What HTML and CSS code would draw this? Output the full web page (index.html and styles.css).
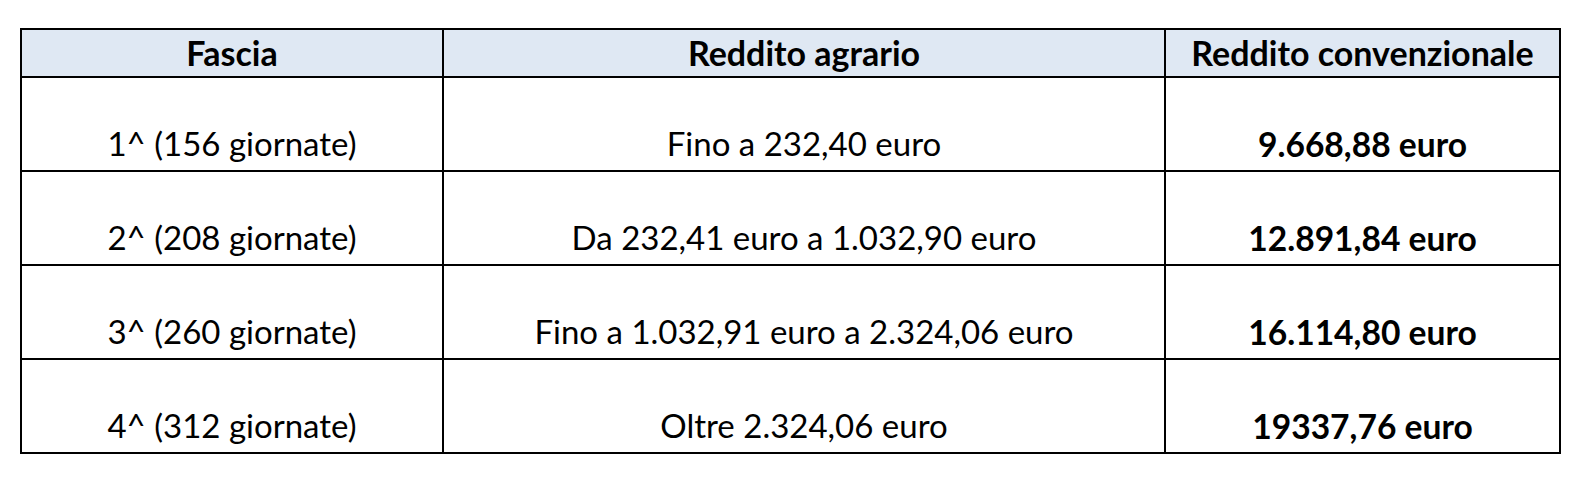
FILE: index.html
```html
<!DOCTYPE html>
<html lang="it">
<head>
<meta charset="utf-8">
<title>Fasce reddito</title>
<link rel="stylesheet" href="styles.css">
</head>
<body>
<div class="wrap">
<table class="tab">
<colgroup>
<col class="c1">
<col class="c2">
<col class="c3">
</colgroup>
<thead>
<tr class="head"><th>Fascia</th><th>Reddito agrario</th><th>Reddito convenzionale</th></tr>
</thead>
<tbody>
<tr class="row"><td>1^ (156 giornate)</td><td>Fino a 232,40 euro</td><td class="b">9.668,88 euro</td></tr>
<tr class="row"><td>2^ (208 giornate)</td><td>Da 232,41 euro a 1.032,90 euro</td><td class="b">12.891,84 euro</td></tr>
<tr class="row"><td>3^ (260 giornate)</td><td>Fino a 1.032,91 euro a 2.324,06 euro</td><td class="b">16.114,80 euro</td></tr>
<tr class="row"><td>4^ (312 giornate)</td><td>Oltre 2.324,06 euro</td><td class="b">19337,76 euro</td></tr>
</tbody>
</table>
</div>
</body>
</html>
```

FILE: styles.css
```css
html, body {
  margin: 0;
  padding: 0;
  background: #ffffff;
}
.wrap {
  padding: 28px 0 0 20px;
}
.tab {
  border-collapse: collapse;
  table-layout: fixed;
  width: 1539px;
  font-family: Lato, "Liberation Sans", sans-serif;
  font-size: 33px;
  line-height: 1.2;
  color: #000;
}
.c1 { width: 422px; }
.c2 { width: 722px; }
.c3 { width: 395px; }
.tab th, .tab td {
  border: 2px solid #000;
  text-align: center;
  padding: 0;
  box-sizing: border-box;
}
.head th {
  background: #dfe8f3;
  height: 48px;
  font-size: 34px;
  font-weight: 700;
  vertical-align: middle;
}
.row td {
  height: 94px;
  vertical-align: bottom;
  padding-bottom: 6px;
}
.row td.b {
  font-size: 33.6px;
  font-weight: 700;
}
```
